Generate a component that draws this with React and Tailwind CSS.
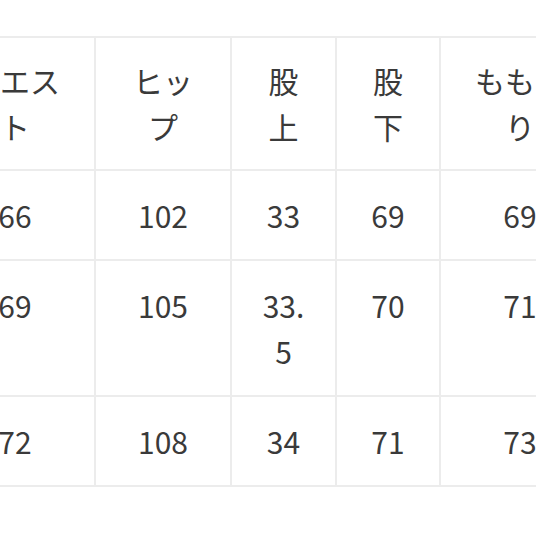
import React from 'react'

const headers = ['ウエスト', 'ヒップ', '股上', '股下', 'もも回り']
const widths = ['w-[160px]', 'w-[136px]', 'w-[105px]', 'w-[104px]', 'w-[160px]']

const rows = [
  ['66', '102', '33', '69', '69'],
  ['69', '105', '33.5', '70', '71'],
  ['72', '108', '34', '71', '73'],
]

const cell = 'border-2 border-[#ececec] px-[24px] py-[21px] text-center align-top break-all'

const App = () => {
  return (
    <div className="w-[536px] h-[536px] overflow-hidden bg-white pt-[36px] font-['Noto_Sans_CJK_JP',sans-serif] text-[30px] leading-[46px] text-[#3a3a3a]">
      <table className="table-fixed border-collapse ml-[-66px] w-[665px]">
        <colgroup>
          {widths.map((w, i) => (
            <col key={i} className={w} />
          ))}
        </colgroup>
        <thead>
          <tr>
            {headers.map((h) => (
              <th key={h} className={`${cell} font-normal pt-[19px] pb-[20px]`}>
                {h}
              </th>
            ))}
          </tr>
        </thead>
        <tbody>
          {rows.map((r, i) => (
            <tr key={i}>
              {r.map((v, j) => (
                <td key={j} className={cell}>
                  {v}
                </td>
              ))}
            </tr>
          ))}
        </tbody>
      </table>
    </div>
  )
}

export default App
